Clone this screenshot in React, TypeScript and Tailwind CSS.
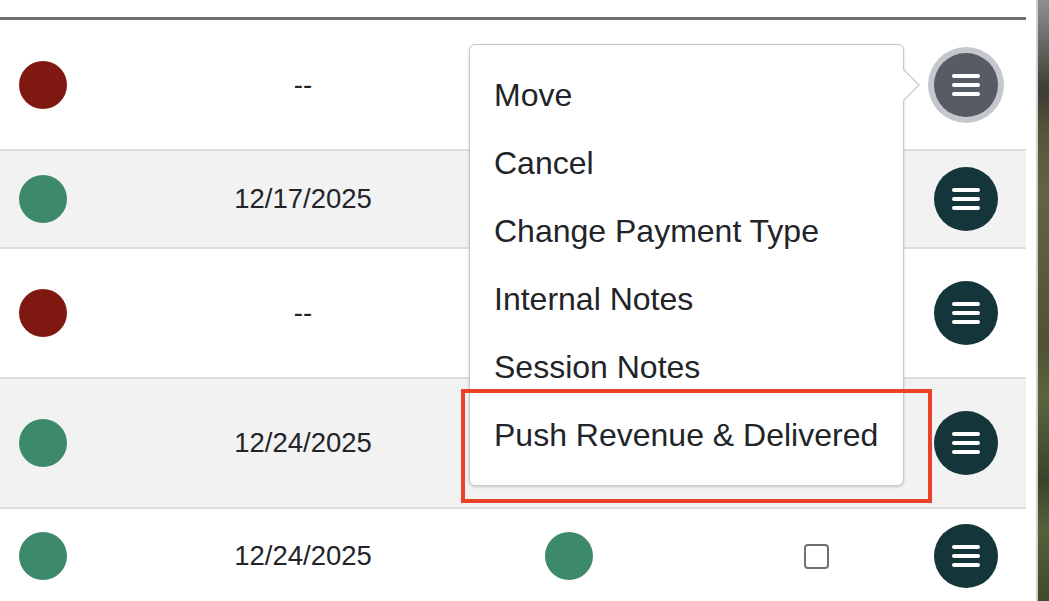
import React from "react";

type Row = {
  status: "red" | "green";
  date: string;
  h: string;
  bg: string;
  third?: boolean;
  check?: boolean;
  focused?: boolean;
};

const rows: Row[] = [
  { status: "red", date: "--", h: "h-[131px]", bg: "bg-white", focused: true },
  { status: "green", date: "12/17/2025", h: "h-[98px]", bg: "bg-[#f2f2f2]" },
  { status: "red", date: "--", h: "h-[130px]", bg: "bg-white" },
  { status: "green", date: "12/24/2025", h: "h-[130px]", bg: "bg-[#f2f2f2]" },
  { status: "green", date: "12/24/2025", h: "h-[96px]", bg: "bg-white", third: true, check: true },
];

function Bars() {
  return (
    <div className="flex flex-col gap-[5px]">
      <div className="w-[28px] h-[4px] rounded-[2px] bg-white" />
      <div className="w-[28px] h-[4px] rounded-[2px] bg-white" />
      <div className="w-[28px] h-[4px] rounded-[2px] bg-white" />
    </div>
  );
}

function MenuButton({ focused }: { focused?: boolean }) {
  if (focused) {
    return (
      <div className="w-[76px] h-[76px] -ml-[6px] rounded-full bg-[#c4c7cc] flex items-center justify-center">
        <div className="w-[64px] h-[64px] rounded-full bg-[#575b63] flex items-center justify-center">
          <Bars />
        </div>
      </div>
    );
  }
  return (
    <div className="w-[64px] h-[64px] rounded-full bg-[#14363a] flex items-center justify-center">
      <Bars />
    </div>
  );
}

const menuItems = [
  "Move",
  "Cancel",
  "Change Payment Type",
  "Internal Notes",
  "Session Notes",
  "Push Revenue & Delivered",
];

export default function App() {
  return (
    <div
      className="relative w-[1049px] h-[601px] overflow-hidden bg-white flex text-[#212529]"
      style={{ fontFamily: '"Liberation Sans", Arial, Helvetica, sans-serif' }}
    >
      <div className="w-[1026px] pt-[17px] flex flex-col shrink-0">
        <div className="h-[3px] shrink-0 bg-[#707070]" />
        {rows.map((r, i) => (
          <div
            key={i}
            className={`${r.h} ${r.bg} shrink-0 border-b-2 border-[#dedede] grid grid-cols-[110px_386px_146px_292px_1fr] items-center`}
          >
            <div className="pl-[19px]">
              <div
                className={`w-[48px] h-[48px] rounded-full ${
                  r.status === "red" ? "bg-[#7f1810]" : "bg-[#3d8a6a]"
                }`}
              />
            </div>
            <div className="text-center text-[27.5px] leading-none">{r.date}</div>
            <div className="flex justify-center">
              {r.third && <div className="w-[48px] h-[48px] rounded-full bg-[#3d8a6a]" />}
            </div>
            <div className="pl-[162px]">
              {r.check && (
                <div className="w-[25px] h-[25px] rounded-[4px] border-2 border-[#707070] bg-white" />
              )}
            </div>
            <div className="flex items-center">
              <MenuButton focused={r.focused} />
            </div>
          </div>
        ))}
      </div>
      <div className="w-[10px] shrink-0 bg-white" />
      <div className="w-[2px] shrink-0 bg-[#cfcfcf]" />
      <div className="flex-1 bg-[linear-gradient(180deg,#8e8e8e_0%,#7a7a78_4%,#3b3d33_15%,#55553a_22%,#626244_32%,#5a5a3c_45%,#4e5232_58%,#5a6440_66%,#39452a_80%,#55603c_88%,#3f4a2a_100%)]" />

      {/* Popover menu */}
      <div className="absolute left-[469px] top-[44px] w-[435px] h-[442px] bg-white border border-[#c8c8c8] rounded-[6px] shadow-[0_1px_3px_rgba(0,0,0,0.18)] pt-[16px]">
        {menuItems.map((m) => (
          <div key={m} className="h-[68px] flex items-center pl-[24px] text-[32px] leading-none whitespace-nowrap">
            {m}
          </div>
        ))}
      </div>
      <svg
        className="absolute left-[902px] top-[68px]"
        width="18"
        height="34"
        viewBox="0 0 18 34"
      >
        <path d="M1 0 L17 17 L1 34 Z" fill="white" />
        <path d="M1 1 L17 17 L1 33" fill="none" stroke="#c8c8c8" strokeWidth="1.2" />
      </svg>

      {/* Red highlight */}
      <div className="absolute left-[461px] top-[389px] w-[471px] h-[114px] border-4 border-[#ea4228]" />
    </div>
  );
}
